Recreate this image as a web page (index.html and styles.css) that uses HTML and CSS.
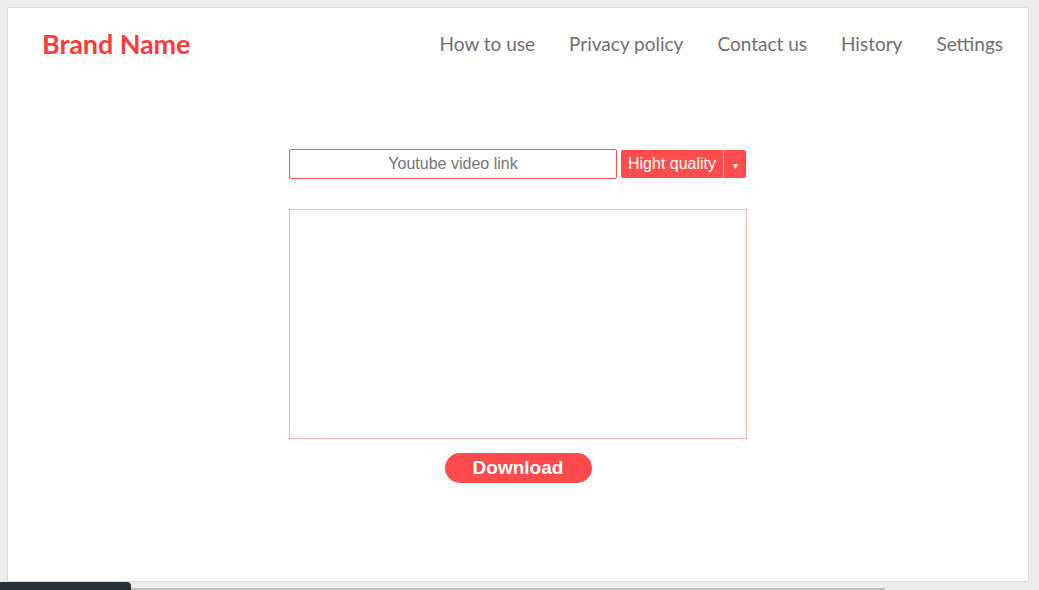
FILE: index.html
```html
<!DOCTYPE html>
<html>
<head>
<meta charset="utf-8">
<title>Downloader</title>
<link rel="stylesheet" href="styles.css">
</head>
<body>
<div class="panel">
  <header class="header">
    <div class="brand">Brand Name</div>
    <nav class="nav">
      <a href="#">How to use</a>
      <a href="#">Privacy policy</a>
      <a href="#">Contact us</a>
      <a href="#">History</a>
      <a href="#">Settings</a>
    </nav>
  </header>
  <main class="main">
    <div class="row">
      <input class="link" type="text" placeholder="Youtube video link">
      <div class="quality">
        <span class="q-label">Hight quality</span>
        <span class="q-arrow">&#9662;</span>
      </div>
    </div>
    <div class="preview"></div>
    <button class="download">Download</button>
  </main>
</div>
<div class="taskbar"></div>
<div class="scroll"></div>
</body>
</html>
```
FILE: styles.css
```css
html, body {
  margin: 0;
  padding: 0;
  height: 100%;
  overflow: hidden;
}
body {
  background: #ececec;
  position: relative;
}
.panel {
  position: absolute;
  left: 7px;
  top: 7px;
  width: 1020px;
  height: 573px;
  background: #fff;
  border: 1px solid #dcdcdc;
  display: flex;
  flex-direction: column;
}
.header {
  display: flex;
  align-items: center;
  justify-content: space-between;
  padding: 18px 25px 0 34px;
  height: 34px;
}
.brand {
  font-family: "Lato", sans-serif;
  font-weight: 700;
  font-size: 27px;
  color: #ff3b3b;
  letter-spacing: -0.1px;
}
.nav {
  display: flex;
  gap: 34px;
}
.nav a {
  font-family: "Lato", sans-serif;
  font-size: 19px;
  color: #707070;
  text-decoration: none;
}
.main {
  display: flex;
  flex-direction: column;
  align-items: center;
  padding-top: 89px;
}
.row {
  display: flex;
  align-items: center;
  gap: 4px;
  width: 458px;
}
.link {
  box-sizing: border-box;
  width: 328px;
  height: 30px;
  border: 1px solid #ff5252;
  border-radius: 2px;
  text-align: center;
  font-family: "Liberation Sans", Arial, sans-serif;
  font-size: 16px;
  padding: 0;
  outline: none;
}
.link::placeholder {
  color: #757575;
}
.quality {
  display: flex;
  height: 28px;
  background: #ff4d4d;
  border-radius: 2px;
  color: #fff;
  font-family: "Liberation Sans", Arial, sans-serif;
  font-size: 16px;
}
.q-label {
  display: flex;
  align-items: center;
  width: 103px;
  box-sizing: border-box;
  padding-left: 7px;
  border-right: 1px solid #ffb3b3;
}
.q-arrow {
  display: flex;
  align-items: center;
  justify-content: center;
  width: 22px;
  font-size: 10px;
  padding-top: 2px;
}
.preview {
  box-sizing: border-box;
  width: 458px;
  height: 230px;
  margin-top: 30px;
  border: 1px solid #ffb0b0;
}
.download {
  margin-top: 14px;
  width: 147px;
  height: 30px;
  border: none;
  border-radius: 15px;
  background: #ff4b4b;
  color: #fff;
  font-family: "Liberation Sans", Arial, sans-serif;
  font-weight: 700;
  font-size: 19px;
  padding: 0;
}
.taskbar {
  position: absolute;
  left: 0;
  top: 582px;
  width: 131px;
  height: 8px;
  background: #263238;
  border-top-right-radius: 4px;
}
.scroll {
  position: absolute;
  left: 131px;
  top: 588px;
  width: 754px;
  height: 2px;
  background: #bdbdbd;
}
```
